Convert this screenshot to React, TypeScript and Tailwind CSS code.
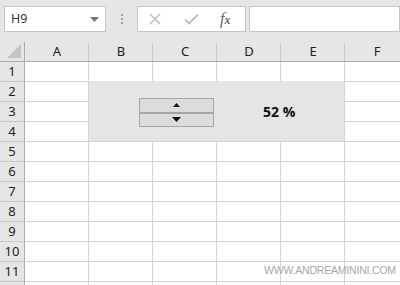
import React from "react";

const cols = ["A", "B", "C", "D", "E", "F"];
const rows = [1, 2, 3, 4, 5, 6, 7, 8, 9, 10, 11, 12];

export default function App() {
  return (
    <div className="w-[400px] h-[285px] overflow-hidden bg-[#e6e6e6] relative" style={{ fontFamily: '"Noto Sans", "Open Sans", sans-serif' }}>
      {/* Formula bar */}
      <div className="h-[42px] flex items-start pt-[6px] pl-[4px] gap-0">
        <div className="w-[102px] h-[26px] bg-white border border-[#c6c6c6] flex items-center justify-between pl-[6px] pr-[6px]">
          <span className="text-[12.5px] text-[#333] leading-none">H9</span>
          <svg width="9" height="5" viewBox="0 0 9 5"><path d="M0 0 L9 0 L4.5 5 Z" fill="#777" /></svg>
        </div>
        <div className="w-[31px] h-[26px] flex flex-col items-center justify-center gap-[2px]">
          <div className="w-[2px] h-[2px] bg-[#a0a0a0]" />
          <div className="w-[2px] h-[2px] bg-[#a0a0a0]" />
          <div className="w-[2px] h-[2px] bg-[#a0a0a0]" />
        </div>
        <div className="w-[109px] h-[26px] bg-white border border-[#c6c6c6] flex items-center">
          <svg className="ml-[11px]" width="12" height="12" viewBox="0 0 12 12"><path d="M1 1 L11 11 M11 1 L1 11" stroke="#bdbdbd" strokeWidth="1.5" /></svg>
          <svg className="ml-[23px]" width="15" height="12" viewBox="0 0 15 12"><path d="M1 6.5 L5 10.5 L14 1.5" stroke="#bdbdbd" strokeWidth="1.8" fill="none" /></svg>
          <span className="ml-[21px] text-[16px] italic text-[#666] leading-none" style={{ fontFamily: '"Liberation Serif", serif' }}>f<span className="text-[12px] font-bold">x</span></span>
        </div>
        <div className="ml-[3px] flex-1 h-[26px] bg-white border border-[#c6c6c6]" />
      </div>

      {/* Grid */}
      <div className="relative bg-white">
        <div className="grid grid-cols-[25px_64px_64px_64px_64px_64px_64px]" style={{ gridAutoRows: "20px" }}>
          <div className="bg-[#e6e6e6] border-r border-b border-[#ababab] relative">
            <svg className="absolute right-[3px] bottom-[3px]" width="14" height="14" viewBox="0 0 14 14"><path d="M14 0 L14 14 L0 14 Z" fill="#c4c4c4" /></svg>
          </div>
          {cols.map((c) => (
            <div key={c} className="bg-[#e6e6e6] border-b border-[#ababab] flex items-center justify-center text-[13px] text-[#222] relative">
              <span className="leading-none">{c}</span>
              <div className="absolute right-0 top-[2px] bottom-0 w-px bg-[#c8c8c8]" />
            </div>
          ))}
          {rows.map((r) => (
            <React.Fragment key={r}>
              <div className="bg-[#e6e6e6] border-r border-[#ababab] border-b border-b-[#c8c8c8] flex items-center justify-center text-[13px] text-[#222]">
                {r < 12 ? <span className="leading-none">{r}</span> : null}
              </div>
              {cols.map((c) => (
                <div key={c} className="border-r border-b border-[#d4d4d4] bg-white" />
              ))}
            </React.Fragment>
          ))}
        </div>

        {/* Form control shape */}
        <div className="absolute left-[89px] top-[39px] w-[255px] h-[60px] bg-[#e5e5e5]">
          <div className="absolute left-[50px] top-[17px] w-[75px] h-[29px] border border-[#a6a6a6] bg-[#a6a6a6] flex flex-col gap-[2px]">
            <div className="flex-1 bg-[#dcdcdc] flex items-center justify-center">
              <svg width="7" height="4" viewBox="0 0 7 4"><path d="M0 4 L7 4 L3.5 0 Z" fill="#111" /></svg>
            </div>
            <div className="flex-1 bg-[#dcdcdc] flex items-center justify-center">
              <svg width="9" height="5" viewBox="0 0 9 5"><path d="M0 0 L9 0 L4.5 5 Z" fill="#111" /></svg>
            </div>
          </div>
          <div className="absolute left-[174px] top-[24px] text-[14px] font-bold text-[#111] leading-none" style={{ fontFamily: '"Open Sans", sans-serif' }}>52 %</div>
        </div>

        {/* Watermark */}
        <div className="absolute left-[264px] top-[223px] text-[10.5px] text-[#a8a8a8] leading-none tracking-[-0.2px]" style={{ fontFamily: '"Liberation Sans", Arial, sans-serif' }}>WWW.ANDREAMININI.COM</div>
      </div>
    </div>
  );
}
